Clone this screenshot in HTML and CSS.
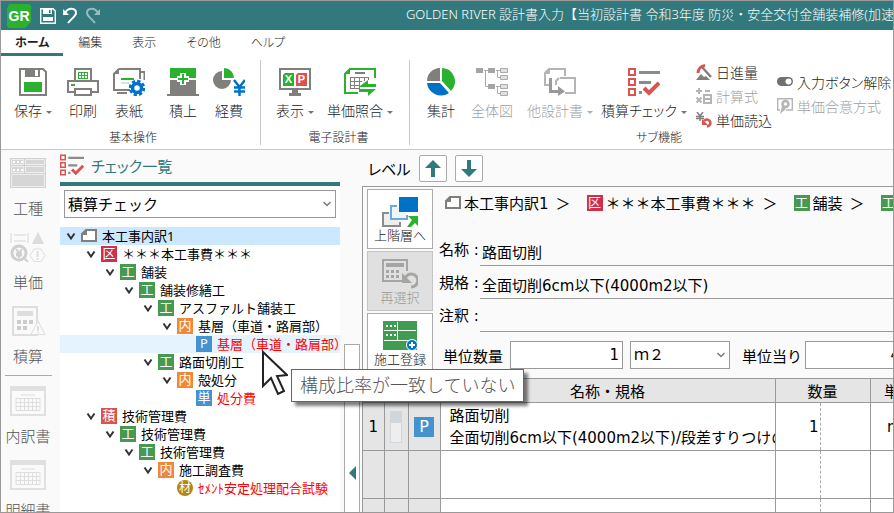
FILE: index.html
```html
<!DOCTYPE html>
<html lang="ja">
<head>
    <meta charset="UTF-8">
    <title>GOLDEN RIVER 設計書入力</title>
    <link rel="stylesheet" href="styles.css">
</head>
<body>
    <!-- 共通アイコン -->
    <svg class="symbols" width="0" height="0">
        <symbol id="i-chevron" viewBox="0 0 10 10"><path d="M1.500 2.500L5 7.500L8.500 2.500" fill="none" stroke="#333" stroke-width="2"/></symbol>
        <symbol id="i-page" viewBox="0 0 16 14"><path d="M5 1H15V12H1V5Z" fill="#fff" stroke="#807f7b" stroke-width="2"/><path d="M0 6L6 0V6Z" fill="#807f7b"/></symbol>
        <symbol id="i-check" viewBox="0 0 32 28">
            <path d="M1 1H7V7H1ZM1 11H7V17H1ZM1 21H7V27H1Z" fill="none" stroke="#d9534f" stroke-width="2"/>
            <path d="M11 3H32V6H11ZM11 13H23V16H11ZM11 23H14V26H11Z" fill="#8b8b88"/>
            <path d="M16 20L21 25L31 15" fill="none" stroke="#d9534f" stroke-width="4"/>
        </symbol>
        <symbol id="i-book" viewBox="0 0 36 30">
            <path d="M0 0H36V5H0Z" fill="#e0e0e0"/>
            <path d="M1 5V29H35V5" fill="none" stroke="#e0e0e0" stroke-width="2"/>
            <path d="M11 9H25M6 12.500H30V24.500H6ZM6 16.500H30M6 20.500H30M10.500 12V25M14.500 12V25M18.500 12V25M22.500 12V25M26.500 12V25" fill="none" stroke="#dedede"/>
        </symbol>
    </svg>

    <!-- タイトルバー -->
    <header class="titlebar">
        <div class="quick">
            <svg class="logo" width="24" height="24" viewBox="0 0 24 24"><path d="M2 0H22L24 2V18L18 24H2L0 22V5Z" fill="#2ab130"/><text x="12" y="17" text-anchor="middle" class="logo-text">GR</text></svg>
            <svg width="16" height="16" viewBox="0 0 16 16"><path d="M.7.700H13L15.300 3V15.300H.7Z" fill="none" stroke="#fff" stroke-width="1.400"/><path d="M3 1H12V6H3ZM3 9H13V13H3Z" fill="#fff"/><path d="M9 2H10.500V5H9Z" fill="#31797c"/></svg>
            <svg width="15" height="17" viewBox="0 0 15 17"><path d="M2 6C5 0 13 0.500 13 6C13 9 9 11 5 16" fill="none" stroke="#fff" stroke-width="2"/><path d="M0 2V8H6Z" fill="#fff"/></svg>
            <svg width="15" height="17" viewBox="0 0 15 17" opacity=".5"><path d="M13 6C10 0 2 0.500 2 6C2 9 6 11 10 16" fill="none" stroke="#fff" stroke-width="2"/><path d="M15 2V8H9Z" fill="#fff"/></svg>
        </div>
        <div class="title">GOLDEN RIVER 設計書入力【当初設計書 令和3年度 防災・安全交付金舗装補修(加速</div>
    </header>

    <!-- タブ -->
    <nav class="tabs">
        <button class="tab active">ホーム</button>
        <button class="tab">編集</button>
        <button class="tab">表示</button>
        <button class="tab">その他</button>
        <button class="tab">ヘルプ</button>
    </nav>

    <!-- リボン -->
    <div class="ribbon">
        <section class="group group-basic">
            <div class="tools">
                <button class="tool drop">
                    <svg width="28" height="28" viewBox="0 0 28 28"><path d="M1 1H24L27 4V27H1Z" fill="none" stroke="#807f7b" stroke-width="2"/><path d="M6 0H21V9H6Z" fill="#807f7b"/><path d="M16 2H19V8H16Z" fill="#fff"/><path d="M5 14H23V24H5Z" fill="#2ab130"/></svg>
                    <span class="name">保存</span>
                </button>
                <button class="tool">
                    <svg width="32" height="28" viewBox="0 0 32 28"><path d="M8 12V1H24V12M7 24H1V13H31V24H25" fill="none" stroke="#807f7b" stroke-width="2"/><path d="M8 21H24V27H8Z" fill="#fff" stroke="#807f7b" stroke-width="2"/><path d="M11 4.500H21M11 7.500H21M11 10.500H21M11.500 4V11M14.500 4V11M17.500 4V11M20.500 4V11" stroke="#2ab130"/><path d="M4 16H8V18H4Z" fill="#2ab130"/></svg>
                    <span class="name">印刷</span>
                </button>
                <button class="tool">
                    <svg width="32" height="28" viewBox="0 0 32 28"><path d="M6 1H27V11M17 22H1V6L6 1M28 4H31.500V12M4 25H14" fill="none" stroke="#807f7b" stroke-width="2"/><path d="M0 6L6 0V6Z" fill="#807f7b"/><path d="M8 11H21" stroke="#2ab130" stroke-width="2"/><path d="M8 15H16" stroke="#9fd6b5"/><circle cx="24" cy="20" r="7" fill="none" stroke="#0072c6" stroke-width="2.500" stroke-dasharray="3.300 2.200"/><circle cx="24" cy="20" r="4.500" fill="#fff" stroke="#0072c6" stroke-width="3.500"/></svg>
                    <span class="name">表紙</span>
                </button>
                <button class="tool spaced">
                    <svg width="32" height="28" viewBox="0 0 32 28"><path d="M3 0H29V10H3Z" fill="#2ab130"/><path d="M3 12H29V26H32V28H0V26H3Z" fill="#807f7b"/><path d="M13 5H19V8H22V14H19V17H13V14H10V8H13Z" fill="#fff"/><path d="M16 6V16M11 11H21" stroke="#2ab130" stroke-width="2"/></svg>
                    <span class="name">積上</span>
                </button>
                <button class="tool">
                    <svg width="32" height="28" viewBox="0 0 32 28"><path d="M9 3A9 9 0 1 0 18 12H9Z" fill="#807f7b"/><path d="M11 0A10 10 0 0 1 21 10H11Z" fill="#2ab130"/><path d="M21 12L26.500 19L32 12M26.500 18V28M21 19.500H32M21 23.500H32" fill="none" stroke="#0072c6" stroke-width="2.500"/></svg>
                    <span class="name">経費</span>
                </button>
            </div>
            <h2 class="group-name">基本操作</h2>
        </section>
        <section class="group group-design">
            <div class="tools">
                <button class="tool drop">
                    <svg width="32" height="28" viewBox="0 0 32 28"><path d="M1 1H31V21H1Z" fill="none" stroke="#807f7b" stroke-width="2"/><path d="M13 22H19V25H22V28H10V25H13Z" fill="#807f7b"/><path d="M6 5H15V18H4V7Z" fill="#2ab130"/><path d="M19 5H28V18H17V7Z" fill="#d9534f"/><text x="9.500" y="15" text-anchor="middle" class="tile-text">X</text><text x="22.500" y="15" text-anchor="middle" class="tile-text">P</text></svg>
                    <span class="name">表示</span>
                </button>
                <button class="tool drop w76">
                    <svg width="32" height="28" viewBox="0 0 32 28"><path d="M31 10V1H6L1 6V25H14" fill="none" stroke="#2ab130" stroke-width="2"/><path d="M0 6L6 0V6Z" fill="#2ab130"/><path d="M11 5H21" stroke="#807f7b" stroke-width="2"/><path d="M6 9.500H25M6 13.500H18M6 17.500H16M6 20.500H16M6.500 9V21M10.500 9V21M15.500 9V21M20.500 9V13M24.500 9V12" stroke="#807f7b"/><path d="M16 18L24 12V16H32V19H16ZM32 21L24 28V24H15V21Z" fill="#2ab130"/></svg>
                    <span class="name">単価照合</span>
                </button>
            </div>
            <h2 class="group-name">電子設計書</h2>
        </section>
        <section class="group group-sub">
            <div class="tools">
                <button class="tool">
                    <svg width="28" height="28" viewBox="0 0 28 28"><path d="M13 0V13H0A13 13 0 0 1 13 0Z" fill="#807f7b"/><path d="M15 0A13.500 13.500 0 0 1 24 23L15 13Z" fill="#2ab130"/><path d="M0 15H13L22 25A14 14 0 0 1 0 15Z" fill="#0072c6"/></svg>
                    <span class="name">集計</span>
                </button>
                <button class="tool w56" disabled>
                    <svg width="32" height="28" viewBox="0 0 32 28"><path d="M0 0H7V5H0ZM12 0H19V5H12ZM12 16H19V21H12Z" fill="#a5a5a5"/><path d="M24.500.500H31.500V4.500H24.500ZM24.500 7.500H31.500V11.500H24.500ZM24.500 16.500H31.500V20.500H24.500ZM24.500 23.500H31.500V27.500H24.500Z" fill="#e0e0e0" stroke="#aaa"/><path d="M8 2.500H12M9.500 3V18.500H12M20 2.500H24M21.500 3V9.500H24M20 18.500H24M21.500 19V25.500H24" fill="none" stroke="#aaa"/></svg>
                    <span class="name">全体図</span>
                </button>
                <button class="tool drop w80" disabled>
                    <svg width="32" height="28" viewBox="0 0 32 28"><path d="M21 8V1H5L1 5V17H5M16 10H31V25H21M12 17V13L15 10" fill="none" stroke="#b5b5b5" stroke-width="2"/><path d="M0 6L6 0V6Z" fill="#b5b5b5"/><path d="M6.500 10V23.500H16" fill="none" stroke="#999" stroke-width="3"/><path d="M14 18L21 23.500L14 28Z" fill="#999"/></svg>
                    <span class="name">他設計書</span>
                </button>
                <button class="tool drop w88">
                    <svg width="32" height="28"><use href="#i-check"/></svg>
                    <span class="name">積算チェック</span>
                </button>
                <div class="mini-list">
                    <button class="mini"><svg width="16" height="16" viewBox="0 0 16 16"><path d="M0 16L5 10L8 13L10 12L14 16Z" fill="#807f7b"/><path d="M6 3L15 13" stroke="#807f7b" stroke-width="2.500"/><path d="M2 9C2 5 5 2 9 1.500" fill="none" stroke="#d9534f" stroke-width="3"/></svg>日進量</button>
                    <button class="mini" disabled><svg width="16" height="16" viewBox="0 0 16 16"><path d="M3 0V6M0 3H6M9 3H14M0.500 9.500L5.500 14.500M5.500 9.500L.5 14.500" stroke="#b5b5b5" stroke-width="2"/><path d="M8 7H15V15H8ZM8 11H15" fill="none" stroke="#b5b5b5" stroke-width="2"/></svg>計算式</button>
                    <button class="mini"><svg width="16" height="16" viewBox="0 0 16 16"><path d="M1 0L4 4L7 0M4 4V9M0 4.500H8M0 6.500H8" fill="none" stroke="#807f7b" stroke-width="1.500"/><path d="M8 9A3.500 3.500 0 1 1 11 14.500" fill="none" stroke="#d9534f" stroke-width="2.500"/><path d="M6 7V13H12Z" fill="#d9534f"/></svg>単価読込</button>
                </div>
                <div class="mini-list second">
                    <button class="mini"><svg width="16" height="16" viewBox="0 0 16 16"><rect y="3" width="16" height="9" rx="4.500" fill="#70706d"/><circle cx="11.500" cy="7.500" r="3" fill="#fff"/></svg>入力ボタン解除</button>
                    <button class="mini" disabled><svg width="16" height="16" viewBox="0 0 16 16"><path d="M3 12H.7V.700H15.300V12H9" fill="none" stroke="#b5b5b5" stroke-width="1.400"/><circle cx="8.500" cy="6" r="3" fill="none" stroke="#b5b5b5" stroke-width="2.500"/><path d="M3 16L5 8L9 11Z" fill="#b5b5b5"/></svg>単価合意方式</button>
                </div>
            </div>
            <h2 class="group-name">サブ機能</h2>
        </section>
    </div>

    <div class="workspace">
        <!-- 左メニュー -->
        <nav class="rail">
            <button class="rail-item">
                <svg width="36" height="30" viewBox="0 0 36 30"><path d="M0 0H36V30H0Z" fill="#d2d2d2"/><path d="M1.500 1.500H13.500V6.500H1.500ZM15.500 1.500H34.500V6.500H15.500ZM1.500 8.500H13.500V14.500H1.500ZM15.500 8.500H34.500V14.500H15.500ZM1.500 16.500H34.500V28.500H1.500Z" fill="#d6d6d6" stroke="#eee"/><path d="M3 4H5M7 4H9M11 4H13M3 12H5M7 12H9M11 12H13" stroke="#fff" stroke-width="2"/></svg>
                工種
            </button>
            <button class="rail-item">
                <svg width="36" height="30" viewBox="0 0 36 30"><path d="M1 1V11M4 3H16M4 9H16M18 1V11" fill="none" stroke="#e8e8e8" stroke-width="2"/><path d="M28 0L34 12H22Z" fill="#dcdcdc"/><circle cx="9" cy="21" r="7" fill="none" stroke="#cfcfcf" stroke-width="3"/><path d="M6 17L9 21L12 17M9 21V26M6 21.500H12M6 23.500H12M14 26L18 30" fill="none" stroke="#cfcfcf" stroke-width="2"/><path d="M24 17H31L35 23.500L31 29.500H24L20 23.500Z" fill="none" stroke="#ddd"/><path d="M27.500 19V25M27.500 26V28" stroke="#ddd" stroke-width="2"/></svg>
                単価
            </button>
            <button class="rail-item">
                <svg width="36" height="30" viewBox="0 0 36 30"><path d="M3 1H27V29H3Z" fill="none" stroke="#dedede" stroke-width="2"/><path d="M7 5H23V10H7Z" fill="#dedede"/><path d="M7 16H11M13 16H17M19 16H23M7 22H11M13 22H17" stroke="#ccc" stroke-width="4"/><path d="M28 15L35 28.500H21Z" fill="#fafafa" stroke="#ddd"/><path d="M28 20V25M28 26V27" stroke="#ddd" stroke-width="2"/></svg>
                積算
            </button>
            <hr class="rail-line">
            <button class="rail-item"><svg width="36" height="30"><use href="#i-book"/></svg>内訳書</button>
            <button class="rail-item"><svg width="36" height="30"><use href="#i-book"/></svg>明細書</button>
        </nav>

        <!-- チェック一覧 -->
        <aside class="check-panel">
            <h2 class="panel-title"><svg width="24" height="22"><use href="#i-check"/></svg>チェック一覧</h2>
            <div class="panel-body">
                <div class="select-box">
                    <select class="select" aria-label="一覧の種類"><option>積算チェック</option></select>
                    <svg class="select-arrow" width="8" height="6" viewBox="0 0 8 6"><path d="M.500 1L4 4.500L7.500 1" fill="none" stroke="#777" stroke-width="1.500"/></svg>
                </div>
                <ul class="tree">
                    <li class="row lv0 selected"><svg class="arrow"><use href="#i-chevron"/></svg><svg width="16" height="14"><use href="#i-page"/></svg>本工事内訳1</li>
                    <li class="row lv1"><svg class="arrow"><use href="#i-chevron"/></svg><span class="mark crimson">区</span>＊＊＊本工事費＊＊＊</li>
                    <li class="row lv2"><svg class="arrow"><use href="#i-chevron"/></svg><span class="mark green">工</span>舗装</li>
                    <li class="row lv3"><svg class="arrow"><use href="#i-chevron"/></svg><span class="mark green">工</span>舗装修繕工</li>
                    <li class="row lv4"><svg class="arrow"><use href="#i-chevron"/></svg><span class="mark green">工</span>アスファルト舗装工</li>
                    <li class="row lv5"><svg class="arrow"><use href="#i-chevron"/></svg><span class="mark orange">内</span>基層（車道・路肩部）</li>
                    <li class="row lv6 hover error"><span class="mark blue">P</span>基層（車道・路肩部）</li>
                    <li class="row lv4"><svg class="arrow"><use href="#i-chevron"/></svg><span class="mark green">工</span>路面切削工</li>
                    <li class="row lv5"><svg class="arrow"><use href="#i-chevron"/></svg><span class="mark orange">内</span>殻処分</li>
                    <li class="row lv6 error"><span class="mark blue">単</span>処分費</li>
                    <li class="row lv1"><svg class="arrow"><use href="#i-chevron"/></svg><span class="mark red">積</span>技術管理費</li>
                    <li class="row lv2"><svg class="arrow"><use href="#i-chevron"/></svg><span class="mark green">工</span>技術管理費</li>
                    <li class="row lv3"><svg class="arrow"><use href="#i-chevron"/></svg><span class="mark green">工</span>技術管理費</li>
                    <li class="row lv4"><svg class="arrow"><use href="#i-chevron"/></svg><span class="mark orange">内</span>施工調査費</li>
                    <li class="row lv5 error"><span class="mark round">材</span>ｾﾒﾝﾄ安定処理配合試験</li>
                </ul>
            </div>
        </aside>

        <div class="splitter">
            <button class="collapse" aria-label="一覧を閉じる"><svg width="7" height="14" viewBox="0 0 7 14"><path d="M7 0V14L0 7Z" fill="#31797c"/></svg></button>
        </div>

        <!-- 明細入力 -->
        <main class="main">
            <div class="level">
                レベル
                <button class="level-btn" aria-label="上へ"><svg width="16" height="17" viewBox="0 0 16 17"><path d="M8 0L16 8H10V17H6V8H0Z" fill="#31797c"/></svg></button>
                <button class="level-btn" aria-label="下へ"><svg width="16" height="17" viewBox="0 0 16 17"><path d="M8 17L16 9H10V0H6V9H0Z" fill="#31797c"/></svg></button>
            </div>
            <div class="sheet">
                <div class="detail">
                    <div class="side-buttons">
                        <button class="side-btn">
                            <svg width="36" height="30" viewBox="0 0 36 30"><path d="M7 16H1V29H18V25" fill="#eee" stroke="#8b8b88" stroke-width="2"/><path d="M15 9H9V22H25V18" fill="#eef5fb" stroke="#6aaade" stroke-width="2"/><path d="M17 0H36V15H17Z" fill="#0072c6"/><path d="M26 19H36V29L33 26L29 30H25L30 23Z" fill="#2ab130"/></svg>
                            上階層へ
                        </button>
                        <button class="side-btn" disabled>
                            <svg width="36" height="30" viewBox="0 0 36 30"><path d="M20 22H1V1H25V12" fill="none" stroke="#a5a5a3" stroke-width="2"/><path d="M4 4H22V8H4ZM4 11H7V14H4ZM9 11H12V14H9ZM14 11H17V14H14ZM4 16H7V19H4ZM9 16H12V19H9ZM14 16H17V19H14Z" fill="#a5a5a3"/><path d="M23 20A6.500 6.500 0 1 1 29 28" fill="none" stroke="#a5a5a3" stroke-width="3"/><path d="M20 14V24H30Z" fill="#a5a5a3"/></svg>
                            再選択
                        </button>
                        <button class="side-btn">
                            <svg width="36" height="30" viewBox="0 0 36 30"><path d="M1 0H35V29H1Z" fill="#3f9d52"/><path d="M2 9.500H34M2 19.500H34M15.500 1V19" stroke="#fff"/><path d="M4 5H6M8 5H10M12 5H14M4 14H6M8 14H10M12 14H14" stroke="#fff" stroke-width="2"/><circle cx="30" cy="24" r="5.500" fill="#0072c6" stroke="#fff"/><path d="M30 21V27M27 24H33" stroke="#fff" stroke-width="2"/></svg>
                            施工登録
                        </button>
                    </div>
                    <div class="form">
                        <div class="crumbs">
                            <svg width="16" height="14"><use href="#i-page"/></svg>本工事内訳1<span class="gt">＞</span>
                            <span class="mark crimson">区</span>＊＊＊本工事費＊＊＊<span class="gt">＞</span>
                            <span class="mark green">工</span>舗装<span class="gt">＞</span>
                            <span class="mark green">工</span>
                        </div>
                        <div class="field"><label for="itemName">名称 :</label><input type="text" id="itemName" value="路面切削"></div>
                        <div class="field"><label for="itemSpec">規格 :</label><input type="text" id="itemSpec" value="全面切削6cm以下(4000m2以下)"></div>
                        <div class="field"><label for="itemNote">注釈 :</label><input type="text" id="itemNote"></div>
                        <div class="units">
                            <label for="unitQty">単位数量</label>
                            <input type="text" class="num" id="unitQty" value="1">
                            <div class="select-box unit">
                                <select class="select" aria-label="単位"><option>ｍ２</option></select>
                                <svg class="select-arrow" width="8" height="6" viewBox="0 0 8 6"><path d="M.500 1L4 4.500L7.500 1" fill="none" stroke="#777" stroke-width="1.500"/></svg>
                            </div>
                            <label for="perUnit" class="per">単位当り</label>
                            <input type="text" class="num short" id="perUnit" value="4">
                        </div>
                    </div>
                </div>
                <table class="items">
                    <colgroup>
                        <col class="c-no"><col class="c-flag"><col class="c-kind"><col class="c-name"><col class="c-int"><col class="c-dec"><col class="c-unit">
                    </colgroup>
                    <thead>
                        <tr><th></th><th></th><th></th><th>名称・規格</th><th colspan="2">数量</th><th>単位</th></tr>
                    </thead>
                    <tbody>
                        <tr>
                            <td class="head">1</td>
                            <td class="head"><span class="flag"></span></td>
                            <td class="head"><span class="mark blue big">P</span></td>
                            <td class="name-cell">路面切削<br>全面切削6cm以下(4000m2以下)/段差すりつけの</td>
                            <td class="int">1</td>
                            <td class="dec"></td>
                            <td class="unit-cell">m2</td>
                        </tr>
                        <tr><td class="head"></td><td class="head"></td><td class="head"></td><td></td><td class="int"></td><td class="dec"></td><td></td></tr>
                        <tr><td class="head"></td><td class="head"></td><td class="head"></td><td></td><td class="int"></td><td class="dec"></td><td></td></tr>
                    </tbody>
                </table>
            </div>
        </main>
    </div>

    <!-- ツールチップ -->
    <div class="tooltip" role="tooltip">構成比率が一致していない</div>
    <svg class="cursor" width="26" height="46" viewBox="0 0 26 46"><path d="M1 2V36L9 28L16 44L22 41L15 26L25 25Z" fill="#fff" stroke="#222" stroke-width="2"/></svg>
</body>
</html>
```

FILE: styles.css
```css
* {
    box-sizing: border-box;
}
body {
    margin: 0;
    height: 100vh;
    display: flex;
    flex-direction: column;
    overflow: hidden;
    position: relative;
    border: 1px solid #999;
    background-color: #fafafa;
    color: #000;
    font-family: "Noto Sans", "Noto Sans CJK JP", sans-serif;
    font-size: 15px;
    font-weight: 300;
}
button, input, select {
    font: inherit;
    color: inherit;
    margin: 0;
    padding: 0;
    border: none;
    background: none;
}
h2 {
    margin: 0;
    font-weight: inherit;
}
svg {
    flex: none;
}
.symbols {
    position: absolute;
}

/* タイトルバー */
.titlebar {
    display: grid;
    grid-template-columns: 45.4% 1fr;
    align-items: center;
    flex: none;
    height: 29px;
    background-color: #31797c;
    color: #fff;
}
.quick {
    display: flex;
    align-items: center;
    gap: 7px;
    padding-left: 6px;
}
.quick .logo {
    margin-right: 2px;
}
.logo-text {
    font: bold 14px "Liberation Sans", sans-serif;
    fill: #fff;
}
.tile-text {
    font: bold 11px "Liberation Sans", sans-serif;
    fill: #fff;
}
.title {
    font-size: 13px;
    line-height: 20px;
    padding-bottom: 4px;
    white-space: nowrap;
    overflow: hidden;
}

/* タブ */
.tabs {
    display: flex;
    flex: none;
    height: 26px;
    background-color: #fff;
    font-size: 12px;
    font-feature-settings: "palt";
}
.tab {
    padding: 0 15px;
    color: #222;
    border-bottom: 3px solid transparent;
}
.tab.active {
    padding: 0 14px;
    font-weight: bold;
    border-bottom-color: #31797c;
}

/* リボン */
.ribbon {
    display: flex;
    flex: none;
    height: 94px;
    padding: 4px 0;
    background-color: #fff;
    border-bottom: 1px solid #c8c8c8;
    color: #222;
    font-size: 14px;
    font-feature-settings: "palt";
}
.group {
    flex: none;
    border-right: 1px solid #c8c8c8;
}
.group-basic {
    width: 260px;
    padding-left: 5px;
}
.group-design {
    width: 149px;
    padding-left: 7px;
}
.group-sub {
    width: 490px;
    padding-left: 8px;
    border-right: none;
}
.tools {
    display: flex;
    height: 68px;
}
.tool {
    display: flex;
    flex-direction: column;
    align-items: center;
    width: 46px;
    padding-top: 8px;
    white-space: nowrap;
}
.tool .name {
    margin-top: 4px;
    line-height: 22px;
}
.tool.spaced {
    margin-left: 8px;
}
.tool.drop {
    width: 54px;
}
.tool.drop .name::after {
    content: "";
    display: inline-block;
    margin-left: 4px;
    vertical-align: middle;
    border: 3px solid transparent;
    border-top-color: #777;
    border-bottom: none;
}
.tool.w56 { width: 56px; }
.tool.w76 { width: 76px; }
.tool.w80 { width: 80px; }
.tool.w88 { width: 88px; }
.tool:disabled, .mini:disabled {
    color: #a0a0a0;
}
.tool:disabled .name::after {
    border-top-color: #b0b0b0;
}
.mini-list {
    margin-left: 8px;
}
.mini-list.second {
    margin-left: 5px;
    padding-top: 10px;
}
.mini {
    display: flex;
    align-items: center;
    gap: 4px;
    height: 24px;
    white-space: nowrap;
}
.group-name {
    font-size: 12px;
    line-height: 20px;
    text-align: center;
}

.workspace {
    display: flex;
    flex: 1;
    min-height: 0;
}

/* 左メニュー */
.rail {
    flex: none;
    width: 59px;
    overflow: hidden;
}
.rail-item {
    display: flex;
    flex-direction: column;
    align-items: center;
    gap: 8px;
    width: 54px;
    height: 74px;
    padding-top: 8px;
    color: #555;
    line-height: 24px;
}
.rail-line {
    width: 47px;
    margin: 3px 4px 2px;
    border: none;
    border-top: 1px solid #aaa;
}

/* チェック一覧 */
.check-panel {
    display: flex;
    flex-direction: column;
    flex: none;
    width: 280px;
    font-weight: normal;
}
.panel-title {
    display: flex;
    align-items: center;
    gap: 7px;
    flex: none;
    height: 36px;
    padding-bottom: 2px;
    border-bottom: 4px solid #31797c;
    color: #31797c;
    font-size: 15px;
    font-feature-settings: "palt";
}
.panel-body {
    flex: 1;
    min-height: 0;
    overflow: hidden;
    padding-top: 4px;
    background-color: #fff;
}
.select-box {
    position: relative;
    height: 28px;
    margin: 0 4px;
}
.select {
    appearance: none;
    width: 100%;
    height: 100%;
    padding: 0 3px;
    border: 1px solid #999;
    background-color: #fff;
}
.select-arrow {
    position: absolute;
    right: 5px;
    top: 11px;
}
.tree {
    margin: 9px 0 0;
    padding: 0;
    list-style: none;
    font-size: 13px;
}
.row {
    display: flex;
    align-items: center;
    gap: 5px;
    height: 18px;
    line-height: 16px;
    white-space: nowrap;
}
.arrow {
    width: 10px;
    height: 10px;
}
.lv0 { padding-left: 6px; }
.lv1 { padding-left: 26px; }
.lv2 { padding-left: 45px; }
.lv3 { padding-left: 64px; }
.lv4 { padding-left: 83px; }
.lv5 { padding-left: 102px; }
.lv5.error { padding-left: 117px; }
.lv6 { padding-left: 136px; }
.selected {
    background-color: #cce8ff;
}
.hover {
    background-color: #e5f3ff;
}
.error {
    color: #f00;
}
.mark {
    flex: none;
    width: 16px;
    height: 16px;
    color: #fff;
    font-size: 13px;
    font-weight: normal;
    line-height: 15px;
    text-align: center;
}
.crimson { background-color: #cf2e4c; }
.green { background-color: #46994f; }
.orange { background-color: #f0883c; }
.blue { background-color: #4492d0; }
.red { background-color: #d9534f; }
.round {
    border-radius: 50%;
    background-color: #b5860f;
    font-size: 12px;
}
.big {
    display: block;
    width: 20px;
    height: 20px;
    margin: 0 auto;
    font-size: 16px;
    line-height: 20px;
}

/* 開閉バー */
.splitter {
    flex: none;
    width: 22px;
    padding: 194px 2px 0 4px;
    overflow: hidden;
}
.collapse {
    display: flex;
    align-items: center;
    justify-content: center;
    width: 16px;
    height: 258px;
    border: 1px solid #aaa;
    background-color: #fff;
}

/* 明細入力 */
.main {
    display: flex;
    flex-direction: column;
    flex: 1;
    min-width: 0;
    font-family: "DejaVu Sans", "Noto Sans CJK JP", sans-serif;
    font-weight: normal;
}
.level {
    display: flex;
    align-items: center;
    gap: 8px;
    flex: none;
    height: 36px;
    padding-left: 6px;
    font-feature-settings: "palt";
}
.level-btn {
    display: flex;
    align-items: center;
    justify-content: center;
    width: 28px;
    height: 27px;
    border: 1px solid #aaa;
    border-radius: 2px;
    background-color: #fff;
}
.sheet {
    flex: 1;
    min-height: 0;
    overflow: hidden;
    border: 1px solid #999;
    border-width: 1px 0 0 1px;
}
.detail {
    display: flex;
    padding: 2px 0 0 4px;
}
.side-buttons {
    display: flex;
    flex-direction: column;
    flex: none;
    gap: 2px;
    width: 66px;
    height: 189px;
}
.side-btn {
    display: flex;
    flex-direction: column;
    align-items: center;
    justify-content: space-between;
    height: 60px;
    padding: 7px 0 4px;
    border: 1px solid #aaa;
    background-color: #fff;
    color: #222;
    font-size: 13px;
    font-weight: 300;
    line-height: 18px;
    white-space: nowrap;
}
.side-btn:disabled {
    background-color: #e0e0e0;
    border-color: #c4c4c4;
    color: #999;
}
.form {
    flex: 1;
    min-width: 0;
    padding-left: 6px;
}
.crumbs {
    display: flex;
    align-items: center;
    gap: 3px;
    height: 27px;
    margin-bottom: 17px;
    padding-left: 6px;
    white-space: nowrap;
}
.gt {
    margin: 0 13px 0 4px;
}
.field {
    display: flex;
    height: 33px;
}
.field label {
    flex: none;
    width: 41px;
    line-height: 34px;
}
.field input {
    flex: 1;
    min-width: 0;
    padding: 4px 2px 0;
    border-bottom: 1px solid #999;
}
.units {
    display: flex;
    align-items: center;
    height: 28px;
    margin: 9px 0 0 4px;
    white-space: nowrap;
}
.num {
    flex: none;
    width: 113px;
    height: 28px;
    margin-left: 7px;
    padding: 0 3px;
    border: 1px solid #999;
    background-color: #fff;
    text-align: right;
}
.num.short {
    width: 99px;
    margin-left: 3px;
}
.unit {
    flex: none;
    width: 100px;
    margin: 0 0 0 7px;
}
.per {
    margin-left: 12px;
}

/* 明細表 */
.items {
    table-layout: fixed;
    width: 565px;
    border-collapse: collapse;
    background-color: #fff;
}
.items th, .items td {
    height: 48px;
    padding: 0;
    border: 1px solid #999;
    overflow: hidden;
    white-space: nowrap;
}
.items th {
    height: 24px;
    font-weight: inherit;
    background-color: #e5e5e5;
}
.items th:first-child, .items td:first-child {
    border-left: none;
}
.items .head {
    background-color: #e5e5e5;
    text-align: center;
}
.items .name-cell {
    padding-left: 9px;
    line-height: 22px;
}
.items .int {
    padding-right: 1px;
    border-right: 1px dashed #aaa;
    text-align: right;
}
.items .dec {
    border-left: 1px dashed #aaa;
}
.items .unit-cell {
    text-align: center;
}
.c-no { width: 21px; }
.c-flag { width: 24px; }
.c-kind { width: 32px; }
.c-name { width: 335px; }
.c-int { width: 45px; }
.c-dec { width: 50px; }
.c-unit { width: 58px; }
.flag {
    display: block;
    width: 12px;
    height: 32px;
    margin: 0 auto;
    border: 1px solid #d0d6da;
    border-top-width: 12px;
    background-color: #eee;
}

.tooltip {
    position: absolute;
    left: 290px;
    top: 368px;
    padding: 0 8px;
    border: 1px solid #666;
    background-color: #fff;
    box-shadow: 4px 4px 3px rgba(0, 0, 0, .5);
    color: #555;
    font-size: 18px;
    line-height: 31px;
    white-space: nowrap;
}
.cursor {
    position: absolute;
    left: 261px;
    top: 349px;
}
```
